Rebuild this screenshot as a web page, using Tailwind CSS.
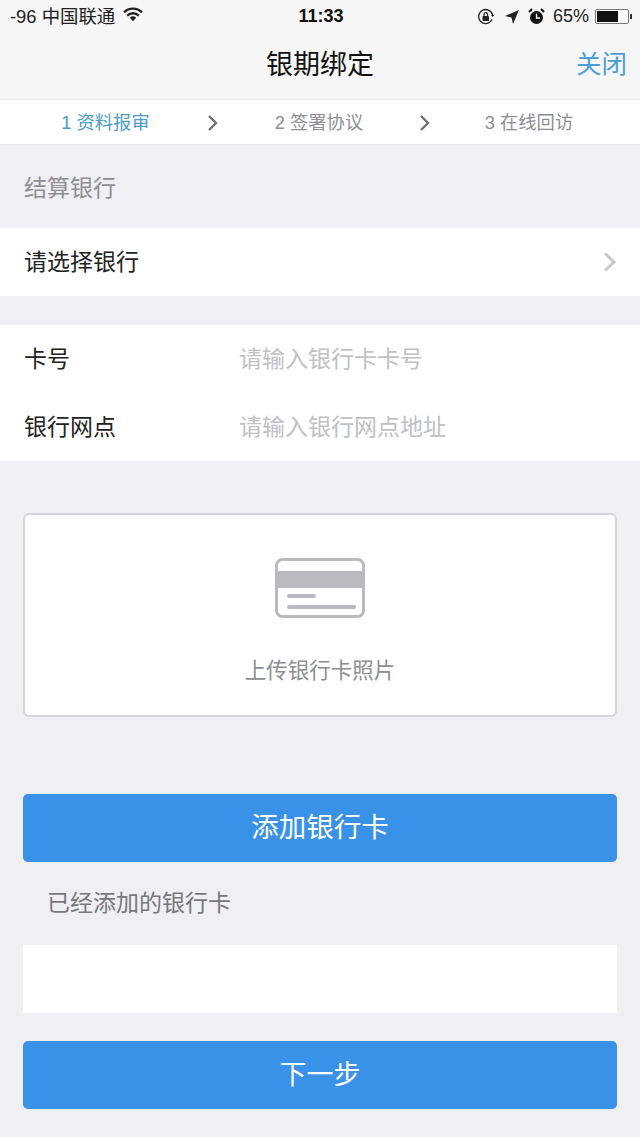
<!DOCTYPE html>
<html lang="zh-CN">

<head>
    <meta charset="UTF-8">
    <meta name="viewport" content="width=device-width, initial-scale=1.0">
    <title>银期绑定</title>
    <script src="https://cdn.jsdelivr.net/npm/@tailwindcss/browser@4"></script>
</head>

<body class="bg-[#efeff4] font-['Liberation_Sans','Noto_Sans_CJK_SC',sans-serif]">
    <div class="w-[640px] h-[1137px] overflow-hidden flex flex-col">
        <!-- status bar + nav -->
        <div class="h-[100px] bg-[#f6f6f6] border-b border-[#e6e6e6] shrink-0">
            <div class="h-[33px] flex items-center justify-between pl-[10px] pr-[8px] text-[#222] text-[18.4px]">
                <div class="flex items-center w-[220px]">
                    <span class="whitespace-nowrap">-96 中国联通</span>
                    <svg class="ml-[8px] mb-[4px]" width="20" height="15" viewBox="0 0 19 14">
                        <path d="M1 5 a12 12 0 0 1 17 0" fill="none" stroke="#222" stroke-width="2.2"/>
                        <path d="M4 8 a8 8 0 0 1 11 0" fill="none" stroke="#222" stroke-width="2.2"/>
                        <path d="M6.5 10 a4 4 0 0 1 6 0 L9.5 13.5 Z" fill="#222"/>
                    </svg>
                </div>
                <span class="font-bold text-[#111] text-[18px]">11:33</span>
                <div class="flex items-center justify-end w-[220px]">
                    <svg width="18" height="18" viewBox="0 0 18 18">
                        <path d="M15 11.5 A7 7 0 1 1 15.5 7" fill="none" stroke="#222" stroke-width="1.3"/>
                        <path d="M14 7 h3.4 l-1.7 2 Z" fill="#222"/>
                        <rect x="5.5" y="8" width="6.5" height="5" rx="1" fill="#222"/>
                        <path d="M7 8 V6.5 a1.8 1.8 0 0 1 3.6 0 V8" fill="none" stroke="#222" stroke-width="1.2"/>
                    </svg>
                    <svg class="ml-[10px]" width="14" height="14" viewBox="0 0 14 14">
                        <path d="M14 0 L8 14 L6.5 7.5 L0 6 Z" fill="#222"/>
                    </svg>
                    <svg class="ml-[9px]" width="17" height="17" viewBox="0 0 17 17">
                        <circle cx="8.5" cy="9.5" r="6.5" fill="#111"/>
                        <path d="M8.5 5.5 V10 H12" fill="none" stroke="#fff" stroke-width="1.3"/>
                        <path d="M1 4 L4 1 M16 4 L13 1" stroke="#111" stroke-width="2"/>
                    </svg>
                    <span class="ml-[8px] mr-[1px] text-[18px]">65%</span>
                    <div class="ml-[5px] w-[34px] h-[15px] border border-[#777] rounded-[2px] p-[1px] bg-white">
                        <div class="w-[21px] h-full bg-[#111]"></div>
                    </div>
                    <div class="w-[2px] h-[5px] bg-[#333] ml-[1px]"></div>
                </div>
            </div>
            <div class="relative h-[66px] flex items-center justify-center">
                <span class="text-[27px] text-[#111] pb-[1px]">银期绑定</span>
                <span class="absolute right-[13px] top-[13px] text-[25.5px] leading-[36px] text-[#4a9fd6]">关闭</span>
            </div>
        </div>

        <!-- steps -->
        <div class="h-[45px] pt-[1px] bg-white border-b border-[#ebebeb] shrink-0 flex items-center text-[18.3px] text-[#8e8e93]">
            <span class="w-[207px] text-center text-[#4b9cc6] pl-[4px] whitespace-nowrap">1 资料报审</span>
            <svg width="12" height="18" viewBox="0 0 12 18" class="shrink-0">
                <path d="M2 2 L9 9 L2 16" fill="none" stroke="#6f7174" stroke-width="2.4"/>
            </svg>
            <span class="w-[200px] text-center whitespace-nowrap">2 签署协议</span>
            <svg width="12" height="18" viewBox="0 0 12 18" class="shrink-0">
                <path d="M2 2 L9 9 L2 16" fill="none" stroke="#6f7174" stroke-width="2.4"/>
            </svg>
            <span class="flex-1 text-center pr-[13px] whitespace-nowrap">3 在线回访</span>
        </div>

        <!-- bank section -->
        <div class="h-[83px] flex items-center pl-[24px] pt-[4px] text-[23px] text-[#8e8e93] shrink-0">结算银行</div>
        <div class="h-[68px] bg-white flex items-center justify-between pl-[24px] pr-[22px] text-[23px] text-[#222] shrink-0">
            <span>请选择银行</span>
            <svg width="16" height="22" viewBox="0 0 16 22">
                <path d="M3 2.5 L12 11 L3 19.5" fill="none" stroke="#c7c7cc" stroke-width="3"/>
            </svg>
        </div>

        <div class="mt-[29px] bg-white text-[23px] shrink-0">
            <div class="h-[68px] flex items-center pl-[24px]">
                <span class="w-[215px] text-[#222]">卡号</span>
                <span class="text-[#c0c0c5]">请输入银行卡卡号</span>
            </div>
            <div class="h-[68px] flex items-center pl-[24px]">
                <span class="w-[215px] text-[#222]">银行网点</span>
                <span class="text-[#c0c0c5]">请输入银行网点地址</span>
            </div>
        </div>

        <div class="px-[23px] shrink-0">
            <!-- upload card -->
            <div class="mt-[52px] h-[204px] bg-white border-2 border-[#d5d5d8] rounded-[6px] flex flex-col items-center">
                <svg class="mt-[43px]" width="90" height="60" viewBox="0 0 90 60">
                    <rect x="1.5" y="1.5" width="87" height="57" rx="6" fill="#fff" stroke="#b9babd" stroke-width="3"/>
                    <rect x="1" y="13" width="88" height="17" fill="#b9babd"/>
                    <rect x="12" y="36" width="29" height="4" rx="2" fill="#b9babd"/>
                    <rect x="12" y="47" width="69" height="4" rx="2" fill="#b9babd"/>
                </svg>
                <span class="mt-[37px] text-[21.5px] leading-[32px] text-[#8e8e93]">上传银行卡照片</span>
            </div>

            <button class="mt-[77px] w-full h-[68px] bg-[#3a91e8] text-white text-[27.5px] rounded-[5px] block">添加银行卡</button>
            <div class="h-[83px] flex items-center pl-[24px] text-[23px] text-[#77777c]">已经添加的银行卡</div>
            <div class="h-[68px] bg-white"></div>
            <button class="mt-[28px] w-full h-[68px] bg-[#3a91e8] text-white text-[27px] rounded-[5px] block">下一步</button>
        </div>
    </div>
</body>
</html>
